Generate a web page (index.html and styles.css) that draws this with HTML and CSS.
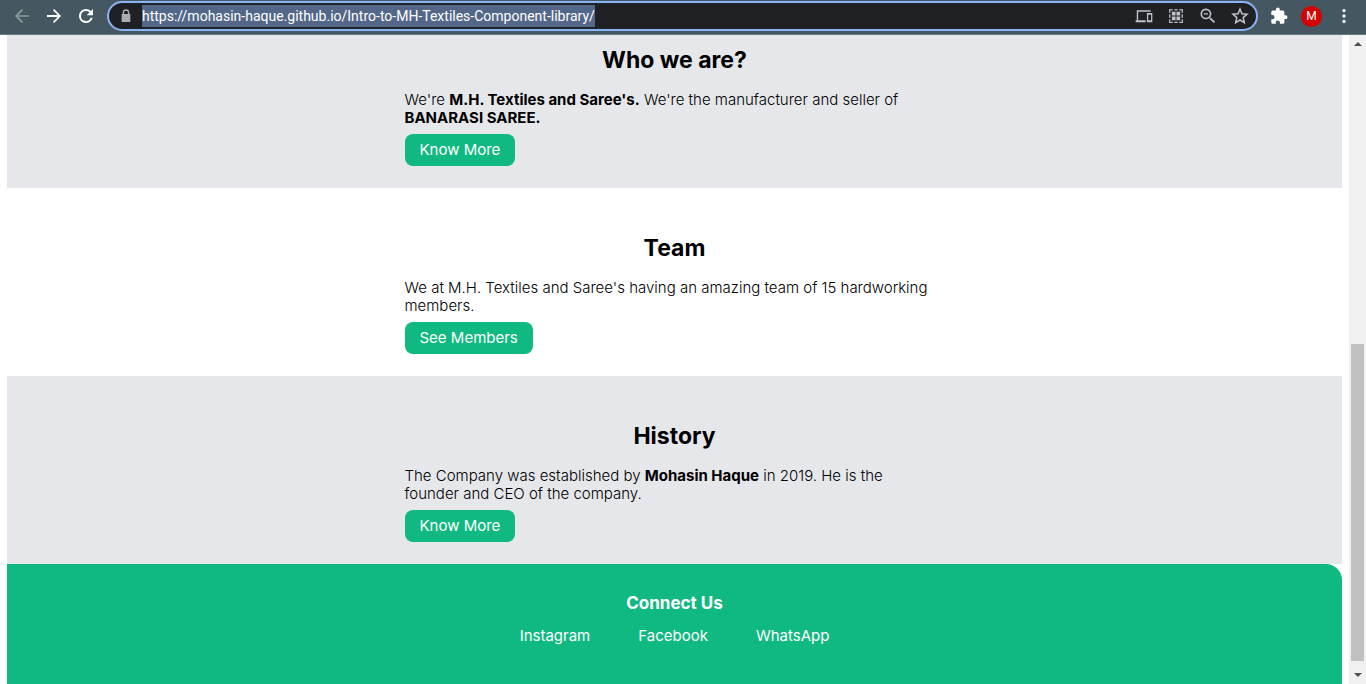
FILE: index.html
```html
<!DOCTYPE html>
<html lang="en">
<head>
  <meta charset="UTF-8">
  <meta name="viewport" content="width=device-width, initial-scale=1.0">
  <title>M.H. Textiles and Saree's</title>
  <link rel="stylesheet" href="styles.css">
</head>
<body>

  <!-- Browser bar -->
  <div class="toolbar">
    <div class="toolbar-group">
      <button class="icon-btn disabled" aria-label="Back">
        <svg viewBox="0 0 24 24"><path d="M20.500 11H7.400l5.800-5.800L11.800 3.700 3.500 12l8.300 8.300 1.400-1.500L7.400 13h13.100z"/></svg>
      </button>
      <button class="icon-btn" aria-label="Forward">
        <svg viewBox="0 0 24 24"><path d="M12.200 3.700l-1.500 1.500 5.700 5.700H3.500v2.300h12.900l-5.700 5.700 1.500 1.500 8.300-8.400z"/></svg>
      </button>
      <button class="icon-btn" aria-label="Reload">
        <svg viewBox="0 0 24 24"><path d="M17.900 6.100A8.400 8.400 0 0 0 12 3.600a8.400 8.400 0 1 0 8.100 10.600h-2.500A6 6 0 1 1 12 6c1.660 0 3.140.69 4.220 1.780L12.800 11.200h7.600V3.600z"/></svg>
      </button>
    </div>

    <div class="address-bar">
      <span class="lock">
        <svg viewBox="0 0 24 24"><path d="M18.500 9H17V7A5 5 0 0 0 7 7v2H5.500v12h13zM9 7a3 3 0 0 1 6 0v2H9z"/></svg>
      </span>
      <input class="url" type="text" aria-label="Address" size="60" spellcheck="false" value="https://mohasin-haque.github.io/Intro-to-MH-Textiles-Component-library/">
      <div class="address-actions">
        <button class="icon-btn" aria-label="Send to your devices">
          <svg viewBox="0 0 24 24"><path d="M5 7h15V5H3.300v12H2v2.500h12V17H5zM22 8.500h-6.500v11H22zM20.500 17H17v-6.500h3.500z"/></svg>
        </button>
        <button class="icon-btn" aria-label="QR code">
          <svg viewBox="0 0 24 24"><path d="M4.500 8V4.500H8M10 4.500h4M16 4.500h3.500V8M19.500 10v4M19.500 16v3.500H16M14 19.500h-4M8 19.500H4.500V16M4.500 14v-4" fill="none" stroke="currentColor" stroke-width="1.500"/><path d="M7 7h4.500v4.500H7zM12.500 7H17v4.500h-4.500zM7 12.500h4.500V17H7zM12.500 12.500H17V17h-4.500z"/></svg>
        </button>
        <button class="icon-btn" aria-label="Zoom">
          <svg viewBox="0 0 24 24"><path d="M15.500 14h-.79l-.28-.27A6.500 6.500 0 1 0 13.730 14.430l.27.28v.79l5 4.990L20.490 19zm-6 0a4.500 4.500 0 1 1 0-9 4.500 4.500 0 0 1 0 9zM7 8.700h5v1.600H7z"/></svg>
        </button>
        <button class="icon-btn" aria-label="Bookmark this page">
          <svg viewBox="0 0 24 24"><path d="M20.500 9.800l-6.200-.5L12 3.600 9.700 9.300l-6.200.5 4.700 4.100L6.800 20l5.200-3.200 5.200 3.200-1.400-6.100z" fill="none" stroke="currentColor" stroke-width="1.800"/></svg>
        </button>
      </div>
    </div>

    <div class="toolbar-group">
      <button class="icon-btn" aria-label="Extensions">
        <svg viewBox="-1 -1 26 26"><path d="M20.500 11H19V7a2 2 0 0 0-2-2h-4V3.500a2.500 2.500 0 0 0-5 0V5H4a2 2 0 0 0-2 2v3.800h1.500a2.700 2.700 0 0 1 0 5.400H2V20a2 2 0 0 0 2 2h3.800v-1.500a2.700 2.700 0 0 1 5.400 0V22H17a2 2 0 0 0 2-2v-4h1.500a2.500 2.500 0 0 0 0-5z"/></svg>
      </button>
      <button class="avatar" aria-label="Profile">M</button>
      <button class="icon-btn" aria-label="Menu">
        <svg viewBox="0 0 24 24"><circle cx="12" cy="5.500" r="2"/><circle cx="12" cy="12" r="2"/><circle cx="12" cy="18.500" r="2"/></svg>
      </button>
    </div>
  </div>

  <div class="viewport">
    <div class="page">
      <main>
        <section class="section section-gray section-first">
          <div class="container">
            <h2>Who we are?</h2>
            <p>We're <strong>M.H. Textiles and Saree's.</strong> We're the manufacturer and seller of <strong>BANARASI SAREE.</strong></p>
            <a class="btn" href="#">Know More</a>
          </div>
        </section>

        <section class="section">
          <div class="container">
            <h2>Team</h2>
            <p>We at M.H. Textiles and Saree's having an amazing team of 15 hardworking members.</p>
            <a class="btn" href="#">See Members</a>
          </div>
        </section>

        <section class="section section-gray">
          <div class="container">
            <h2>History</h2>
            <p>The Company was established by <strong>Mohasin Haque</strong> in 2019. He is the<br>founder and CEO of the company.</p>
            <a class="btn" href="#">Know More</a>
          </div>
        </section>
      </main>

      <footer class="footer">
        <h3>Connect Us</h3>
        <nav class="footer-links">
          <a href="#">Instagram</a>
          <a href="#">Facebook</a>
          <a href="#">WhatsApp</a>
        </nav>
      </footer>
    </div>

    <div class="scrollbar">
      <span class="arrow arrow-up"></span>
      <div class="track"><div class="thumb"></div></div>
      <span class="arrow arrow-down"></span>
    </div>
  </div>

</body>
</html>
```
FILE: styles.css
```css
* {
  box-sizing: border-box;
}

body {
  margin: 0;
  height: 100vh;
  display: flex;
  flex-direction: column;
  overflow: hidden;
  font-family: Inter, "Open Sans", sans-serif;
  background: #fff;
  color: #000;
}

/* browser bar */
.toolbar {
  display: flex;
  align-items: center;
  gap: 11px;
  padding: 1px 12px 3px;
  background: #455760;
  border-bottom: 1px solid #6a7980;
}

.toolbar-group,
.address-actions {
  display: flex;
  align-items: center;
  gap: 12px;
}

.icon-btn {
  width: 20px;
  height: 20px;
  padding: 0;
  border: none;
  background: none;
  color: #fff;
}

.icon-btn svg,
.lock svg {
  display: block;
  width: 100%;
  height: 100%;
  fill: currentColor;
}

.icon-btn.disabled {
  color: #8f9a9f;
}

.address-bar {
  flex: 1;
  display: flex;
  align-items: center;
  height: 30px;
  padding: 0 6px 0 9px;
  background: #202124;
  border: 2px solid #8ab4f8;
  border-radius: 15px;
}

.lock {
  width: 16px;
  height: 16px;
  margin-right: 8px;
  color: #a8adb2;
}

.url {
  field-sizing: content;
  height: 22px;
  padding: 0;
  border: none;
  outline: none;
  background: #536788;
  color: #fff;
  font: 14px Roboto, "Open Sans", sans-serif;
}

.address-actions {
  margin-left: auto;
}

.address-actions .icon-btn {
  color: #bdc1c6;
}

.avatar {
  width: 21px;
  height: 21px;
  padding: 0;
  border: none;
  border-radius: 50%;
  background: #d50000;
  color: #fff;
  font: 12px Roboto, sans-serif;
}

/* page */
.viewport {
  flex: 1;
  min-height: 0;
  display: flex;
}

.page {
  flex: 1;
  display: flex;
  flex-direction: column;
  padding: 0 7px;
}

.section {
  padding: 47px 16px 22px;
}

/* top of this one is scrolled under the bar */
.section-first {
  padding-top: 12px;
}

.section-gray {
  background: #e5e7eb;
}

.container {
  max-width: 540px;
  margin: 0 auto;
}

h2 {
  margin: 0 0 18px;
  font-size: 23px;
  line-height: 26px;
  font-weight: 700;
  text-align: center;
}

p {
  margin: 0 0 7px;
  font-size: 15px;
  line-height: 18px;
  font-weight: 300;
}

strong {
  font-weight: 700;
}

.btn {
  display: block;
  width: fit-content;
  padding: 7px 15px;
  border-radius: 8px;
  background: #10b981;
  color: #fff;
  font-size: 15px;
  line-height: 18px;
  text-decoration: none;
}

.footer {
  flex: 1;
  padding: 29px 16px;
  background: #10b981;
  border-top-right-radius: 16px;
  color: #fff;
  text-align: center;
}

h3 {
  margin: 0 0 14px;
  font-size: 17px;
  line-height: 20px;
  font-weight: 700;
}

.footer-links {
  display: flex;
  justify-content: center;
  gap: 48px;
}

.footer-links a {
  color: #fff;
  font-size: 15px;
  line-height: 18px;
  text-decoration: none;
}

/* scrollbar */
.scrollbar {
  width: 17px;
  display: flex;
  flex-direction: column;
  align-items: center;
  padding: 7px 0;
  background: #f1f1f1;
}

.arrow {
  border: 4px solid transparent;
}

.arrow-up {
  border-top: none;
  border-bottom-color: #505050;
}

.arrow-down {
  border-bottom: none;
  border-top-color: #505050;
}

.track {
  flex: 1;
  align-self: stretch;
  display: flex;
  align-items: flex-end;
  padding: 6px 2px 12px;
}

.thumb {
  flex: 1;
  height: 52%;
  background: #c1c1c1;
}
```
